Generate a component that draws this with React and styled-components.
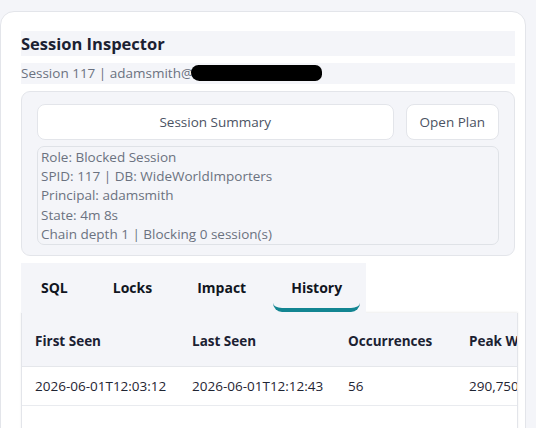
import styled, { createGlobalStyle } from "styled-components";

const GlobalStyle = createGlobalStyle`
  html, body {
    margin: 0;
    padding: 0;
    background: #f4f5f9;
    font-family: "Open Sans", "Noto Sans", "Liberation Sans", sans-serif;
    overflow: hidden;
  }
`;

const Card = styled.div`
  box-sizing: border-box;
  width: 526px;
  height: 440px;
  margin-top: 11px;
  padding: 19px 10px 0 20px;
  background: #ffffff;
  border: 1px solid #e3e5ea;
  border-radius: 14px 14px 0 0;
  overflow: hidden;
`;

const Title = styled.h1`
  margin: 0;
  height: 25px;
  line-height: 25px;
  background: #f4f5f9;
  font-size: 16.5px;
  font-weight: 700;
  color: #1b2132;
`;

const Subtitle = styled.div`
  margin-top: 7px;
  height: 21px;
  line-height: 21px;
  background: #f4f5f9;
  font-size: 13.5px;
  color: #6b7280;
  white-space: nowrap;
`;

const Redacted = styled.span`
  display: inline-block;
  width: 131px;
  height: 16px;
  margin-left: -2px;
  vertical-align: -3px;
  background: #000000;
  border-radius: 9px 8px 8px 10px;
`;

const Panel = styled.section`
  margin-top: 7px;
  padding: 12px 15px 10px 15px;
  background: #f4f5f9;
  border: 1px solid #e3e5ea;
  border-radius: 9px;
`;

const ButtonRow = styled.div`
  display: flex;
  gap: 12px;
`;

const Button = styled.button`
  flex: ${({ $grow }) => ($grow ? "1" : "0 0 auto")};
  height: 36px;
  padding: 0 13px;
  background: #ffffff;
  border: 1px solid #e3e5ea;
  border-radius: 8px;
  font-family: inherit;
  font-size: 13.5px;
  color: #4b5363;
`;

const Details = styled.div`
  margin-top: 6px;
  padding: 1px 3px 0;
  border: 1px solid #dfe2e7;
  border-radius: 7px;
  font-size: 13.5px;
  line-height: 19.2px;
  color: #6b7280;
`;

const TabBar = styled.nav`
  display: inline-flex;
  gap: 9px;
  margin-top: 7px;
  padding: 0 6px 0 2px;
  height: 50px;
  background: #f4f5f9;
`;

const Tab = styled.div`
  box-sizing: border-box;
  display: flex;
  align-items: center;
  padding: 4px 18px 0;
  height: 49px;
  font-size: 14px;
  font-weight: 700;
  color: #11151f;
  border-bottom: 4px solid ${({ $active }) => ($active ? "#128592" : "transparent")};
  border-radius: 0 0 9px 9px;
`;

const TableWrap = styled.div`
  width: 495px;
  height: 140px;
  overflow: hidden;
  border-left: 1px solid #e3e5ea;
  border-right: 1px solid #e3e5ea;
  box-shadow: 0 -1px 2px rgba(0, 0, 0, 0.07);
`;

const Table = styled.table`
  border-collapse: collapse;
  table-layout: fixed;
  width: 584px;
  font-size: 13.5px;
`;

const Th = styled.th`
  height: 50px;
  padding: 3px 13px 0;
  text-align: left;
  background: #f4f5f9;
  font-weight: 700;
  color: #1b2132;
  border-bottom: 1px solid #e5e7eb;
  white-space: nowrap;
  overflow: hidden;
`;

const Td = styled.td`
  height: 38px;
  padding: 0 13px;
  color: #1f2533;
  border-bottom: 1px solid #e9ebef;
  white-space: nowrap;
  overflow: hidden;
`;

const details = [
  "Role: Blocked Session",
  "SPID: 117 | DB: WideWorldImporters",
  "Principal: adamsmith",
  "State: 4m 8s",
  "Chain depth 1 | Blocking 0 session(s)",
];

const tabs = ["SQL", "Locks", "Impact", "History"];

const columns = [
  { label: "First Seen", width: 157 },
  { label: "Last Seen", width: 156 },
  { label: "Occurrences", width: 121 },
  { label: "Peak Wait", width: 150 },
];

const rows = [["2026-06-01T12:03:12", "2026-06-01T12:12:43", "56", "290,750"]];

export default function App() {
  return (
    <>
      <GlobalStyle />
      <Card>
        <Title>Session Inspector</Title>
        <Subtitle>
          Session 117 | adamsmith@<Redacted />
        </Subtitle>
        <Panel>
          <ButtonRow>
            <Button $grow>Session Summary</Button>
            <Button>Open Plan</Button>
          </ButtonRow>
          <Details>
            {details.map((line) => (
              <div key={line}>{line}</div>
            ))}
          </Details>
        </Panel>
        <TabBar>
          {tabs.map((t) => (
            <Tab key={t} $active={t === "History"}>
              {t}
            </Tab>
          ))}
        </TabBar>
        <TableWrap>
          <Table>
            <colgroup>
              {columns.map((c) => (
                <col key={c.label} style={{ width: c.width }} />
              ))}
            </colgroup>
            <thead>
              <tr>
                {columns.map((c) => (
                  <Th key={c.label}>{c.label}</Th>
                ))}
              </tr>
            </thead>
            <tbody>
              {rows.map((r, i) => (
                <tr key={i}>
                  {r.map((cell, j) => (
                    <Td key={j}>{cell}</Td>
                  ))}
                </tr>
              ))}
            </tbody>
          </Table>
        </TableWrap>
      </Card>
    </>
  );
}
